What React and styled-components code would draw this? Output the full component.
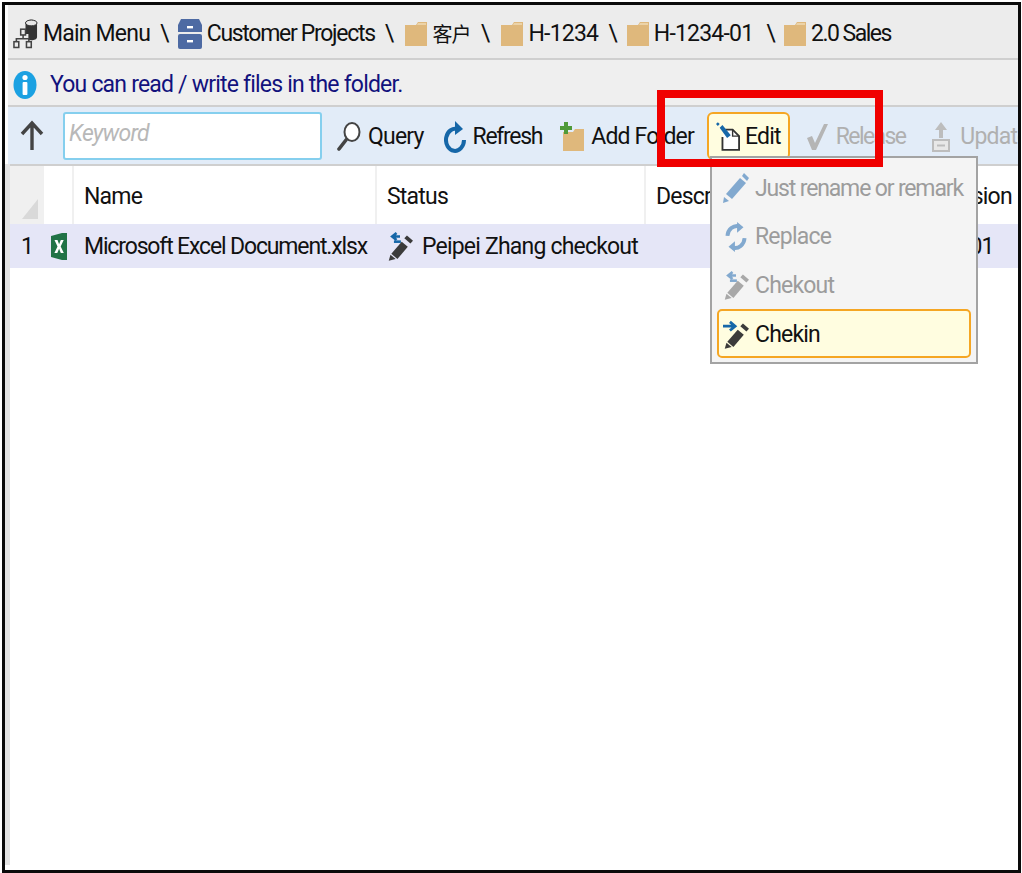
import React from "react";
import styled, { createGlobalStyle } from "styled-components";

const GlobalStyle = createGlobalStyle`
  html, body {
    margin: 0;
    padding: 0;
    background: #fff;
  }
  body {
    font-family: Roboto, "Noto Sans CJK SC", sans-serif;
    font-size: 23px;
    letter-spacing: -0.8px;
    color: #111;
  }
  svg {
    flex: none;
  }
`;

// icons
const InfoIcon = () => (
  <svg width="24" height="30" viewBox="0 0 24 30">
    <ellipse cx="12" cy="15" rx="11.5" ry="14" fill="#1ba1e2" />
    <circle cx="12" cy="7.5" r="2.6" fill="#fff" />
    <rect x="9.6" y="12" width="4.8" height="13" rx="1" fill="#fff" />
  </svg>
);

const TreeDbIcon = () => (
  <svg width="25" height="32" viewBox="0 0 26 32">
    <path d="M13 5c0-5 12-5 12 0v14c0 3-5 4-9 3v-6h-3z" fill="#333" />
    <ellipse cx="19" cy="4.5" rx="6" ry="3" fill="#e6e6e6" stroke="#333" />
    <g fill="none" stroke="#444" strokeWidth="1.6">
      <rect x="8" y="11" width="5" height="6" />
      <rect x="1" y="24" width="5" height="6" />
      <rect x="14" y="24" width="5" height="6" />
      <path d="M10.5 17v4M3.5 24v-3h13v3" />
    </g>
  </svg>
);

const CabinetIcon = () => (
  <svg width="24" height="32" viewBox="0 0 24 32">
    <path d="M3 1h18l3 6v7H0V7z" fill="#4d6aa3" />
    <rect x="0" y="16" width="24" height="15" rx="2" fill="#4d6aa3" />
    <rect x="9" y="8" width="6" height="2.4" fill="#fff" />
    <rect x="9" y="22" width="6" height="2.4" fill="#fff" />
  </svg>
);

const FolderIcon = () => (
  <svg width="22" height="24" viewBox="0 0 22 24">
    <path d="M0 3h11l2-3h9v24H0z" fill="#dfb87c" />
    <path d="M13 1h8v2h-9z" fill="#ecd3a8" />
  </svg>
);

const AddFolderIcon = () => (
  <svg width="24" height="30" viewBox="0 0 24 30">
    <path d="M3 10h10l2-3h9v22H3z" fill="#dfb87c" />
    <path d="M4 0h4v4h4v4H8v4H4V8H0V4h4z" fill="#4f9a3a" />
  </svg>
);

const UpArrow = () => (
  <svg width="24" height="32" viewBox="0 0 24 32">
    <path d="M12 30V4M2 14L12 3l10 11" fill="none" stroke="#444" strokeWidth="3.4" />
  </svg>
);

const QueryIcon = () => (
  <svg width="24" height="32" viewBox="0 0 24 32">
    <ellipse cx="15" cy="11" rx="7.5" ry="9" fill="#fff" stroke="#444" strokeWidth="2" />
    <path d="M9 19L2 28" stroke="#444" strokeWidth="3.6" strokeLinecap="round" />
  </svg>
);

const RefreshIcon = () => (
  <svg width="22" height="32" viewBox="0 0 22 32">
    <path d="M14 8.5A9 11 0 1 0 20 19" fill="none" stroke="#1667a8" strokeWidth="4" />
    <path d="M11 0l8 8-8 6z" fill="#1667a8" />
  </svg>
);

const EditIcon = () => (
  <svg width="24" height="32" viewBox="0 0 26 32">
    <path d="M10 8h8l7 7v15H7V16" fill="#fff" stroke="#333" strokeWidth="2" />
    <path d="M18 8v7h7" fill="none" stroke="#333" strokeWidth="1.5" />
    <path d="M4 6l3-3 9 11-4 3z" fill="#1667a8" />
    <path d="M0 2l2-2 2 2-2 2z" fill="#1667a8" />
  </svg>
);

const CheckIcon = () => (
  <svg width="22" height="28" viewBox="0 0 22 28">
    <path d="M1 15l5-2 3 7L18 1h4L10 27H6z" fill="#b5b5b5" />
  </svg>
);

const UpdateIcon = () => (
  <svg width="18" height="30" viewBox="0 0 18 30">
    <path d="M9 0l6 8h-4v8H7V8H3z" fill="#bdbdbd" />
    <rect x="1" y="18" width="16" height="11" fill="#e8e8e8" stroke="#bdbdbd" strokeWidth="2" />
    <rect x="5" y="22.5" width="8" height="2" fill="#bdbdbd" />
  </svg>
);

const SortCorner = () => (
  <svg width="16" height="20" viewBox="0 0 16 20">
    <path d="M16 0v20H0z" fill="#d9d9d9" />
  </svg>
);

const ExcelIcon = () => (
  <svg width="16" height="27" viewBox="0 0 16 27">
    <path d="M0 3l11-3h5v27h-5L0 24z" fill="#217346" />
    <path d="M3.5 7h3l1.6 4.2L9.8 7h2.9l-3 6.5 3.1 6.5H9.8l-1.7-4.3L6.3 20H3.4l3.1-6.5z" fill="#fff" />
  </svg>
);

const PencilBody = ({ color }) => (
  <>
    <path d="M17 12l7 6-12 14-7-6z" fill={color} />
    <path d="M4 27l6 5-8 2z" fill={color} />
    <path d="M20 8l3-3 7 6-3 3z" fill={color} />
  </>
);

const PencilIcon = () => (
  <svg width="26" height="30" viewBox="0 0 26 30">
    <path d="M17 5l6 5-14 16-6-5z" fill="#82a9cf" />
    <path d="M19 3l2-3 5 5-2 3z" fill="#82a9cf" />
    <path d="M1 24l5 4-6 2z" fill="#82a9cf" />
  </svg>
);

const ReplaceIcon = () => (
  <svg width="26" height="30" viewBox="0 0 24 28">
    <path d="M4 13A9 10 0 0 1 15 4M20 15A9 10 0 0 1 9 24" fill="none" stroke="#82a9cf" strokeWidth="3.6" />
    <path d="M13 0l6 5-6 5zM11 18l-6 5 6 5z" fill="#82a9cf" />
  </svg>
);

const CheckoutIcon = ({ arrow, pencil }) => (
  <svg width="26" height="30" viewBox="0 0 30 34">
    <path d="M15 6H7M11 2L6 6l5 4" fill="none" stroke={arrow} strokeWidth="3" />
    <path d="M16 12H8" stroke={arrow} strokeWidth="3" />
    <PencilBody color={pencil} />
  </svg>
);

const CheckinIcon = () => (
  <svg width="26" height="30" viewBox="0 0 30 34">
    <path d="M0 8h12M8 3l6 5-6 5" fill="none" stroke="#1667a8" strokeWidth="3.2" />
    <PencilBody color="#3b3b3b" />
  </svg>
);

// frame
const Frame = styled.div`
  box-sizing: border-box;
  position: relative;
  width: 1019px;
  height: 871px;
  margin: 2px 0 0 2px;
  border: 3px solid #0a0a0a;
  overflow: hidden;
  display: flex;
  flex-direction: column;
  background: #fff;
`;

const Breadcrumb = styled.div`
  box-sizing: content-box;
  height: 49px;
  padding: 4px 0 0 5px;
  flex: none;
  display: flex;
  align-items: center;
  background: #ececec;
  border-bottom: 2px solid #cfcfcf;
  margin-left: 3px;
`;

const Crumb = styled.div`
  display: flex;
  align-items: center;
  gap: 5px;
  letter-spacing: ${(p) => p.$spacing ?? -0.8}px;
  white-space: nowrap;
`;

const CjkLabel = styled.span`
  font-size: 20px;
`;

const Sep = styled.span`
  margin: 0 ${(p) => p.$right ?? 12}px 0 ${(p) => p.$left ?? 10}px;
`;

const InfoBar = styled.div`
  box-sizing: content-box;
  height: 41px;
  padding: 4px 0 0 5px;
  flex: none;
  display: flex;
  align-items: center;
  gap: 13px;
  background: #efefef;
  border-bottom: 2px solid #cfcfcf;
  margin-left: 3px;
  color: #12127d;
`;

const Toolbar = styled.div`
  height: 57px;
  flex: none;
  display: flex;
  align-items: center;
  background: #e2ecf8;
  border-bottom: 2px solid #cfcfcf;
  margin-left: 3px;
  padding-left: 12px;
  overflow: hidden;
`;

const Keyword = styled.input`
  box-sizing: border-box;
  width: 259px;
  height: 48px;
  flex: none;
  margin: 0 6px 0 19px;
  padding: 0 4px 5px;
  border: 2px solid #85cfee;
  border-radius: 3px;
  background: #fff;
  font: italic 23px Roboto, sans-serif;
  letter-spacing: -0.8px;
  outline: none;
  &::placeholder {
    color: #b8b8b8;
    opacity: 1;
  }
`;

const ToolButton = styled.div`
  box-sizing: border-box;
  height: 48px;
  flex: none;
  display: flex;
  align-items: center;
  gap: ${(p) => p.$gap ?? 7}px;
  padding: 2px 7px 0;
  margin-right: ${(p) => p.$after ?? 2}px;
  border: 2px solid ${(p) => (p.$active ? "#f5a623" : "transparent")};
  border-radius: 6px;
  background: ${(p) => (p.$active ? "#fffde0" : "transparent")};
  color: ${(p) => (p.$disabled ? "#b0b0b0" : "#111")};
  letter-spacing: ${(p) => p.$spacing ?? -0.8}px;
  white-space: nowrap;
`;

const Grid = styled.div`
  flex: 1;
  min-height: 0;
  display: flex;
  flex-direction: column;
`;

const HeaderRow = styled.div`
  height: 58px;
  flex: none;
  display: flex;
  background: #fff;
`;

const Row = styled.div`
  height: 44px;
  flex: none;
  display: flex;
  align-items: center;
  background: #e5e6f7;
  margin-left: 5px;
`;

const CornerCell = styled.div`
  box-sizing: border-box;
  width: 34px;
  margin-left: 5px;
  flex: none;
  display: flex;
  align-items: flex-end;
  justify-content: flex-end;
  padding: 0 6px 5px 0;
  background: #f0f0f0;
`;

const HeadCell = styled.div`
  box-sizing: border-box;
  width: ${(p) => p.$w}px;
  flex: none;
  display: flex;
  align-items: center;
  padding: 2px 0 0 ${(p) => p.$pad ?? 10}px;
  border-right: 2px solid #f0f0f0;
  white-space: nowrap;
`;

const Cell = styled.div`
  box-sizing: border-box;
  width: ${(p) => p.$w}px;
  flex: none;
  display: flex;
  align-items: center;
  gap: ${(p) => p.$gap ?? 0}px;
  padding-left: ${(p) => p.$pad ?? 10}px;
  letter-spacing: ${(p) => p.$spacing ?? -0.8}px;
  white-space: nowrap;
`;

const LeftEdge = styled.div`
  position: absolute;
  left: 0;
  top: 159px;
  bottom: 5px;
  width: 5px;
  background: #e4e4e4;
`;

// overlays
const Menu = styled.div`
  box-sizing: border-box;
  position: absolute;
  left: 705px;
  top: 151px;
  width: 268px;
  height: 208px;
  padding: 5px 5px 0;
  display: flex;
  flex-direction: column;
  border: 2px solid #a3a3a3;
  background: #f4f4f4;
`;

const MenuItem = styled.div`
  box-sizing: border-box;
  height: ${(p) => (p.$active ? 49 : 48.5)}px;
  flex: none;
  display: flex;
  align-items: center;
  gap: 6px;
  padding: 2px 0 0 4px;
  border: 2px solid ${(p) => (p.$active ? "#f5a623" : "transparent")};
  border-radius: 5px;
  background: ${(p) => (p.$active ? "#fffde0" : "transparent")};
  color: ${(p) => (p.$active ? "#111" : "#9c9c9c")};
  letter-spacing: ${(p) => p.$spacing ?? -0.8}px;
  white-space: nowrap;
`;

const Highlight = styled.div`
  box-sizing: border-box;
  position: absolute;
  left: 652px;
  top: 85px;
  width: 226px;
  height: 77px;
  border: 8px solid #f00000;
`;

const App = () => (
  <>
    <GlobalStyle />
    <Frame>
      <Breadcrumb>
        <Crumb>
          <TreeDbIcon />
          Main Menu
        </Crumb>
        <Sep $right={9}>\</Sep>
        <Crumb $spacing={-1.3}>
          <CabinetIcon />
          Customer Projects
        </Crumb>
        <Sep $left={10}>\</Sep>
        <Crumb>
          <FolderIcon />
          <CjkLabel>客户</CjkLabel>
        </Crumb>
        <Sep>\</Sep>
        <Crumb>
          <FolderIcon />
          H-1234
        </Crumb>
        <Sep $right={10}>\</Sep>
        <Crumb>
          <FolderIcon />
          H-1234-01
        </Crumb>
        <Sep $left={13} $right={9}>\</Sep>
        <Crumb $spacing={-1.5}>
          <FolderIcon />
          2.0 Sales
        </Crumb>
      </Breadcrumb>

      <InfoBar>
        <InfoIcon />
        You can read / write files in the folder.
      </InfoBar>

      <Toolbar>
        <UpArrow />
        <Keyword placeholder="Keyword" />
        <ToolButton>
          <QueryIcon />
          Query
        </ToolButton>
        <ToolButton $spacing={-1.3} $after={0}>
          <RefreshIcon />
          Refresh
        </ToolButton>
        <ToolButton $after={4}>
          <AddFolderIcon />
          Add Folder
        </ToolButton>
        <ToolButton $active $gap={5} $after={7}>
          <EditIcon />
          Edit
        </ToolButton>
        <ToolButton $disabled $gap={8} $after={9} $spacing={-1.6}>
          <CheckIcon />
          Release
        </ToolButton>
        <ToolButton $disabled $gap={10}>
          <UpdateIcon />
          Update
        </ToolButton>
      </Toolbar>

      <Grid>
        <HeaderRow>
          <CornerCell>
            <SortCorner />
          </CornerCell>
          <HeadCell $w={30} />
          <HeadCell $w={303}>Name</HeadCell>
          <HeadCell $w={269}>Status</HeadCell>
          <HeadCell $w={294}>Description</HeadCell>
          <HeadCell $w={90} $pad={0}>Version</HeadCell>
        </HeaderRow>
        <Row>
          <Cell $w={34} $pad={11}>1</Cell>
          <Cell $w={30} $pad={7}>
            <ExcelIcon />
          </Cell>
          <Cell $w={303} $spacing={-1.15}>Microsoft Excel Document.xlsx</Cell>
          <Cell $w={269} $gap={9}>
            <CheckoutIcon arrow="#1667a8" pencil="#3b3b3b" />
            Peipei Zhang checkout
          </Cell>
          <Cell $w={294} />
          <Cell $w={60} $pad={12}>1.01</Cell>
        </Row>
      </Grid>

      <LeftEdge />

      <Menu>
        <MenuItem $spacing={-1.15}>
          <PencilIcon />
          Just rename or remark
        </MenuItem>
        <MenuItem>
          <ReplaceIcon />
          Replace
        </MenuItem>
        <MenuItem>
          <CheckoutIcon arrow="#82a9cf" pencil="#a8a8a8" />
          Chekout
        </MenuItem>
        <MenuItem $active>
          <CheckinIcon />
          Chekin
        </MenuItem>
      </Menu>

      <Highlight />
    </Frame>
  </>
);

export default App;
